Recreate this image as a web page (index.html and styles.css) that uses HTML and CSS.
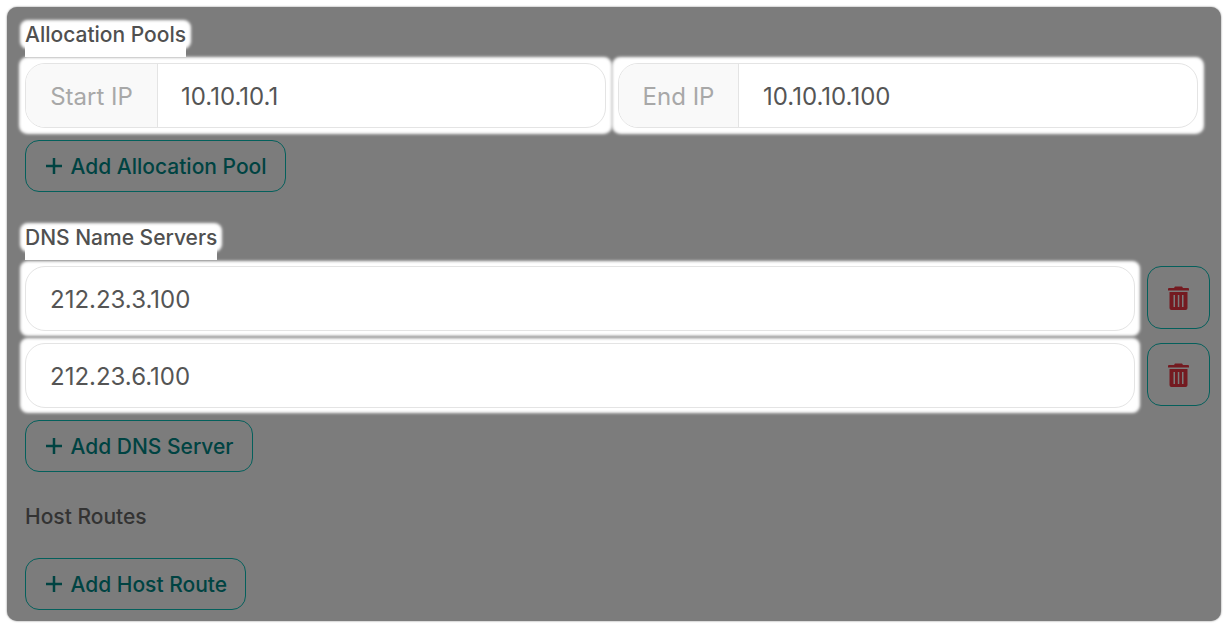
FILE: index.html
```html
<!DOCTYPE html>
<html lang="en">
<head>
    <meta charset="UTF-8">
    <meta name="viewport" content="width=device-width, initial-scale=1.0">
    <title>Subnet Details</title>
    <link rel="stylesheet" href="styles.css">
</head>

<body>
<div class="panel">
    <section class="section section-pools">
        <div class="field-label"><span class="label-spot">Allocation Pools</span></div>
        <div class="pool-row">
            <div class="spot spot-wide">
                <div class="input-group">
                    <span class="addon addon-start">Start IP</span>
                    <input type="text" class="text-input" value="10.10.10.1"/>
                </div>
            </div>
            <div class="spot spot-wide">
                <div class="input-group">
                    <span class="addon addon-end">End IP</span>
                    <input type="text" class="text-input" value="10.10.10.100"/>
                </div>
            </div>
        </div>
        <button class="add-button">
            <svg class="plus-icon" viewBox="0 0 16 16"><path d="M8 0v16M0 8h16"/></svg>
            Add Allocation Pool
        </button>
    </section>

    <section class="section section-dns">
        <div class="field-label"><span class="label-spot">DNS Name Servers</span></div>
        <div class="server-row">
            <div class="spot spot-narrow">
                <div class="input-group">
                    <input type="text" class="text-input server-input" value="212.23.3.100"/>
                </div>
            </div>
            <button class="delete-button" aria-label="Delete">
                <svg class="trash-icon" viewBox="0 0 21 24"><path fill-rule="evenodd" d="M7 0.5h7l1 1.5h5a1 1 0 0 1 1 1v1.5h-21v-1.5a1 1 0 0 1 1-1h5zM1.5 6h18v16a2 2 0 0 1-2 2h-14a2 2 0 0 1-2-2zM5.5 9v12h1.5v-12zM9.8 9v12h1.5v-12zM14 9v12h1.5v-12z"/></svg>
            </button>
        </div>
        <div class="server-row">
            <div class="spot spot-narrow">
                <div class="input-group">
                    <input type="text" class="text-input server-input" value="212.23.6.100"/>
                </div>
            </div>
            <button class="delete-button" aria-label="Delete">
                <svg class="trash-icon" viewBox="0 0 21 24"><path fill-rule="evenodd" d="M7 0.5h7l1 1.5h5a1 1 0 0 1 1 1v1.5h-21v-1.5a1 1 0 0 1 1-1h5zM1.5 6h18v16a2 2 0 0 1-2 2h-14a2 2 0 0 1-2-2zM5.5 9v12h1.5v-12zM9.8 9v12h1.5v-12zM14 9v12h1.5v-12z"/></svg>
            </button>
        </div>
        <button class="add-button">
            <svg class="plus-icon" viewBox="0 0 16 16"><path d="M8 0v16M0 8h16"/></svg>
            Add DNS Server
        </button>
    </section>

    <section class="section section-routes">
        <div class="routes-label">Host Routes</div>
        <button class="add-button">
            <svg class="plus-icon" viewBox="0 0 16 16"><path d="M8 0v16M0 8h16"/></svg>
            Add Host Route
        </button>
    </section>
</div>
</body>
</html>
```

FILE: styles.css
```css
* {
    box-sizing: border-box;
}

html, body {
    margin: 0;
    height: 100%;
}

body {
    padding: 7px;
    background: #fff;
    font-family: Inter, "Liberation Sans", sans-serif;
    overflow: hidden;
}

.panel {
    height: 614px;
    padding: 17px 11px 0 18px;
    background: #7c7c7c;
    border-radius: 10px;
    box-shadow: 0 0 2px #7c7c7c;
}

.section-dns {
    margin-top: 35px;
}

.section-routes {
    margin-top: 35px;
}

.field-label {
    width: fit-content;
    height: 33px;
    padding-top: 1px;
    margin-bottom: 6px;
    background: linear-gradient(#fff, #fff) no-repeat bottom / 100% 20px;
    font-size: 21px;
    font-weight: 500;
    line-height: 19px;
    color: #505050;
}

.label-spot {
    display: block;
    background: #fff;
    border-radius: 3px;
    box-shadow: 0 0 3px 5px #fff;
    white-space: nowrap;
}

.pool-row {
    display: flex;
    gap: 12px;
    padding-right: 12px;
    margin-bottom: 12px;
}

.server-row {
    display: flex;
    gap: 12px;
    margin-bottom: 12px;
}

.spot {
    flex: 1;
    min-width: 0;
    background: #fff;
    border-radius: 3px;
}

.spot-wide {
    box-shadow: 0 0 3px 6px #fff;
}

.spot-narrow {
    box-shadow: 0 0 3px 5px #fff;
}

.input-group {
    display: flex;
    height: 65px;
    background: #fff;
    border: 1px solid #e4e4e4;
    border-radius: 20px;
    overflow: hidden;
}

.addon {
    display: flex;
    align-items: center;
    justify-content: center;
    padding-top: 2px;
    background: #f9f9f9;
    border-right: 1px solid #e4e4e4;
    font-size: 24px;
    color: #a8a8a8;
}

.addon-start {
    width: 132px;
}

.addon-end {
    width: 120px;
    padding-left: 1px;
}

.text-input {
    flex: 1;
    min-width: 0;
    padding: 2px 23px 0;
    border: none;
    outline: none;
    background: transparent;
    font: inherit;
    font-size: 24px;
    color: #555;
}

.addon-end + .text-input {
    padding-left: 24.5px;
}

.server-input {
    padding: 2px 24px 0;
}

.add-button {
    display: flex;
    align-items: center;
    gap: 8.5px;
    height: 52px;
    padding: 0 18.4px 0 20px;
    background: transparent;
    border: 1px solid #04605c;
    border-radius: 14px;
    font: inherit;
    font-size: 21px;
    font-weight: 500;
    color: #004342;
}

.plus-icon {
    width: 16px;
    height: 16px;
    fill: none;
    stroke: #004342;
    stroke-width: 2.5;
}

.delete-button {
    display: flex;
    align-items: center;
    justify-content: center;
    width: 63px;
    height: 63px;
    padding: 0;
    background: transparent;
    border: 1px solid #04605c;
    border-radius: 14px;
}

.trash-icon {
    width: 21px;
    height: 24px;
    fill: #741a20;
}

.routes-label {
    height: 51px;
    font-size: 21px;
    font-weight: 500;
    line-height: 20px;
    color: #333;
}
```
